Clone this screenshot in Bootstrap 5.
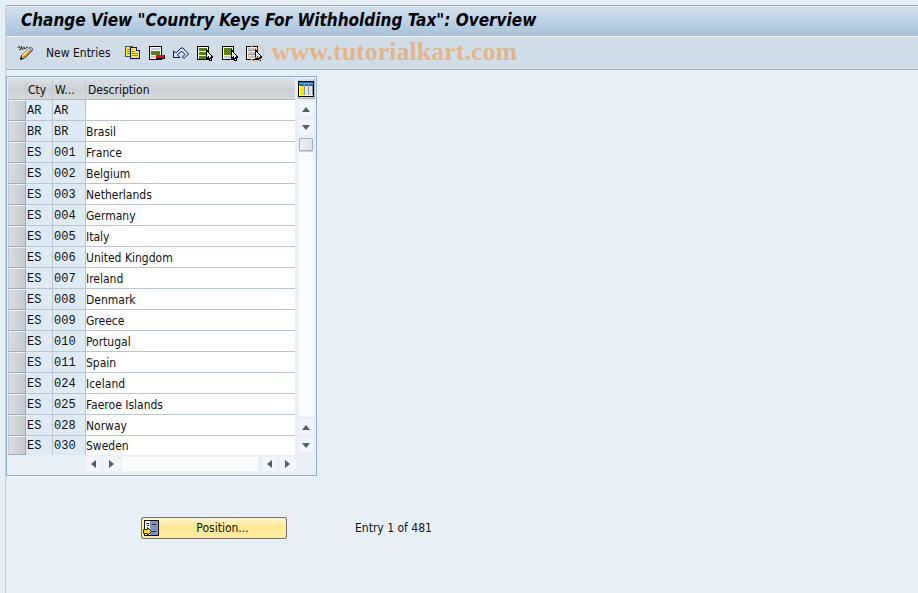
<!DOCTYPE html>
<html lang="en">
<head>
<meta charset="utf-8">
<meta name="viewport" content="width=device-width, initial-scale=1">
<title>Change View "Country Keys For Withholding Tax": Overview</title>
<link href="https://cdn.jsdelivr.net/npm/bootstrap@5.3.0/dist/css/bootstrap.min.css" rel="stylesheet">
<style>
body{background:#e8f0f7;color:#111;font-family:Tahoma,"DejaVu Sans Condensed","Noto Sans",sans-serif;font-size:12px;line-height:16px;padding-top:5px}
.sap-frame{margin-left:5px;border-left:1px solid #c5d0df;min-height:calc(100vh - 5px)}
.sap-title{height:32px;border-top:1px solid #9aa5bb;border-bottom:1px solid #f0f5fa;box-shadow:inset 0 1px #e9f1f8;background:linear-gradient(#d3e2ee,#a9c2da);padding-left:15px}
.sap-title h1{font-size:17px;line-height:20px;font-weight:bold;font-style:italic;color:#000;padding-bottom:2px}
.sap-tools{height:33px;background:#cfdde8;border-bottom:1px solid #a3b4c6;padding-left:11px;gap:8px}
.tool{border:0;background:none;padding:0;line-height:16px;color:#111}
.tool-text{margin:0 6px 0 4px}
.tool svg,.pos-btn svg,.grid-cfg svg{display:block}
.brand-mark{font-family:"Liberation Serif",serif;font-weight:bold;font-size:26px;line-height:28px;color:#e3b588;padding:0 0 2px 2px}
.brand-ring{left:0;top:0;color:#e3b588;pointer-events:none}
.grid-panel{width:311px;border:1px solid #8eaecb;padding:1px 1px 3px 1px;margin-top:6px}
.keys{width:287px;table-layout:fixed;border-collapse:separate;border-spacing:0;line-height:16px}
.keys th,.keys td{padding:0;height:21px;white-space:nowrap;overflow:hidden;font-weight:normal;vertical-align:middle}
.keys thead th{height:22px;background:linear-gradient(#dde1e4,#cbd0d4 60%,#d6dadd);border-right:1px solid #c2cad2;border-bottom:1px solid #adb5be;padding:2px 0 0 2px}
.keys thead th:last-child{border-right:0}
.keys tbody td{background:#fff;border-bottom:1px solid #b9c4d4;padding-top:2px}
.keys tbody td.code{background:#deebf5;border-right:1px solid #b9c4d4;padding-left:1px;font-family:"Courier New","Liberation Mono",monospace}
.keys tbody tr:last-child td{border-bottom:0;height:19px;padding-top:0}
.keys tbody td.pick{padding:0;border:0}
.pick button{display:block;width:18px;height:21px;padding:0;border:1px solid #a1a9b3;border-top-color:#eef1f4;border-left-color:#c0c6cc;background:linear-gradient(90deg,#d9dde1,#c5cad0)}
tr:last-child .pick button{height:19px}
.vscroll{gap:2px;padding-bottom:2px}
.hscroll{gap:2px;padding:1px 20px 0 77px}
.grid-cfg{width:18px;height:21px;border:1px solid #a8b0b9;border-top-color:#e9edf0;border-left-color:#e9edf0;background:#d6dade;padding:0}
.arrow{width:16px;height:16px;border:1px solid #edf1f5;background:#f2f6fa;padding:0;display:flex;align-items:center;justify-content:center;flex:none}
.arrow svg{display:block;fill:#4b5f6e}
.track{background:#f9fbfc;border:1px solid #eef3f7}
.rail{width:16px}
.thumb{width:14px;height:13px;border:1px solid #a3b1bd;border-radius:1px;background:linear-gradient(90deg,#e9f1f7,#d6e3ed);box-shadow:0 1px 1px #c5ccd2}
.below{padding:41px 0 0 135px;gap:68px}
.pos-btn{width:146px;height:22px;border:1px solid #75706a;border-radius:2px;background:linear-gradient(#fff7d1,#ffe991 45%,#ffeda6);padding:0 0 0 1px;color:#111}
</style>
<script src="https://cdn.jsdelivr.net/npm/bootstrap@5.3.0/dist/js/bootstrap.bundle.min.js"></script>
</head>
<body>
<svg class="position-absolute" width="0" height="0" aria-hidden="true">
<defs>
<pattern id="green" width="2" height="2" patternUnits="userSpaceOnUse"><path fill="#6b9200" d="M0 0h2v2H0z"/><path fill="#477400" d="M0 0h1v1H0zM1 1h1v1H1z"/></pattern>
<symbol id="cursor" viewBox="0 0 8 12"><path d="M1.500 1v9l2-2 1 3h2l-1-3h2z" fill="#fff" stroke="#000"/></symbol>
</defs>
</svg>
<div class="sap-frame">
<header class="sap-title d-flex align-items-center"><h1 class="m-0">Change View "Country Keys For Withholding Tax": Overview</h1></header>
<div class="sap-tools d-flex align-items-center" role="toolbar" aria-label="Application toolbar">
<button class="tool" aria-label="Display or change"><svg width="17" height="16" viewBox="0 0 17 16"><path d="M.5 2.500l2-1 1 2M2 5l2-1 1-3M5 5l2-3 1 2 2-2 1 0" fill="none" stroke="#222"/><path d="M3.500 14.500l1-4 8-8 3 2.500-8 8z" fill="#f7aa3c" stroke="#111"/><path d="M5.500 10.500l7-7" stroke="#fff0cf" stroke-width="1.500"/><path d="M12 3.500l1.500-1.500 2.500 2-1.500 2z" fill="#aebdf0" stroke="#6471a0"/><path d="M3 15l1-3 2 2z" fill="#111"/></svg></button>
<button class="tool tool-text">New Entries</button>
<button class="tool" aria-label="Copy as"><svg width="16" height="16" viewBox="0 0 16 16" shape-rendering="crispEdges"><path d="M.5 1.500h7v2h-2v8h-5z" fill="#fff23a" stroke="#55553a"/><path d="M2 4h3M2 6h3M2 8h3" stroke="#777"/><path d="M5.500 2.500h6l3 3v8h-9z" fill="#ffee20" stroke="#0000e8"/><path d="M11.500 2.500v3h3" fill="#fff" stroke="#0000e8"/><path d="M7 6.500h3M7 8.500h6M7 10.500h6" stroke="#8a8420"/></svg></button>
<button class="tool" aria-label="Delete"><svg width="16" height="16" viewBox="0 0 16 16" shape-rendering="crispEdges"><path d="M.5 1.500h12v13H.5z" fill="#fff" stroke="#000"/><path d="M2 3h9v2H2zM2 11h9v2H2z" fill="#bcc9d5"/><path fill="url(#green)" d="M2 6h9v4H2z"/><path d="M7 10h9v4H7z" fill="#000"/><path d="M7 10h8v3H7z" fill="#f00000"/></svg></button>
<button class="tool" aria-label="Undo change"><svg width="16" height="16" viewBox="0 0 16 16"><path d="M.5 6v6.500h6.500l-2.500-2.500 4-4 3.500 3.500-2.500 2.500 1.500 1.500 4.500-4.500-5.500-6h-2l-5 5z" fill="#d7e4f4" stroke="#151575"/></svg></button>
<button class="tool" aria-label="Select all"><svg width="16" height="16" viewBox="0 0 16 16" shape-rendering="crispEdges"><path d="M.5 1.500h11v13H.5z" fill="#fff" stroke="#000"/><path fill="url(#green)" d="M2 3h8v3H2zM2 7h8v3H2zM2 11h8v3H2z"/><use href="#cursor" x="8" y="4" width="8" height="12"/></svg></button>
<button class="tool" aria-label="Select block"><svg width="17" height="16" viewBox="-1 0 17 16" shape-rendering="crispEdges"><path d="M.5 1.500h11v13H.5z" fill="#fff" stroke="#000"/><path fill="url(#green)" d="M2 3h8v7H2z"/><path fill="#bcc9d5" d="M2 11h8v2H2z"/><use href="#cursor" x="8" y="4" width="8" height="12"/></svg></button>
<button class="tool position-relative" aria-label="Deselect all"><svg width="16" height="16" viewBox="0 0 16 16" shape-rendering="crispEdges"><path d="M.5 1.500h11v13H.5z" fill="#fff" stroke="#000"/><path fill="#bcc9d5" d="M2 3h8v2H2zM2 7h8v2H2zM2 11h8v2H2z"/><path d="M2 5.500h8M2 9.500h8" stroke="#7d8b99"/><use href="#cursor" x="8" y="4" width="8" height="12"/></svg><svg class="brand-ring position-absolute" width="18" height="18" viewBox="0 0 18 18" overflow="visible" aria-hidden="true"><circle cx="10" cy="8" r="8" fill="none" stroke="currentColor"/><path d="M13 5a4.500 4.500 0 1 0 0 6" fill="none" stroke="currentColor"/></svg></button>
<span class="brand-mark">www.tutorialkart.com</span>
</div>
<main>
<section class="grid-panel" aria-label="Country keys">
<div class="d-flex justify-content-between">
<table class="keys">
<colgroup><col style="width:18px"><col style="width:27px"><col style="width:33px"><col></colgroup>
<thead><tr><th aria-label="Select"></th><th scope="col">Cty</th><th scope="col">W...</th><th scope="col">Description</th></tr></thead>
<tbody>
<tr><td class="pick"><button aria-label="Select row 1"></button></td><td class="code">AR</td><td class="code">AR</td><td></td></tr>
<tr><td class="pick"><button aria-label="Select row 2"></button></td><td class="code">BR</td><td class="code">BR</td><td>Brasil</td></tr>
<tr><td class="pick"><button aria-label="Select row 3"></button></td><td class="code">ES</td><td class="code">001</td><td>France</td></tr>
<tr><td class="pick"><button aria-label="Select row 4"></button></td><td class="code">ES</td><td class="code">002</td><td>Belgium</td></tr>
<tr><td class="pick"><button aria-label="Select row 5"></button></td><td class="code">ES</td><td class="code">003</td><td>Netherlands</td></tr>
<tr><td class="pick"><button aria-label="Select row 6"></button></td><td class="code">ES</td><td class="code">004</td><td>Germany</td></tr>
<tr><td class="pick"><button aria-label="Select row 7"></button></td><td class="code">ES</td><td class="code">005</td><td>Italy</td></tr>
<tr><td class="pick"><button aria-label="Select row 8"></button></td><td class="code">ES</td><td class="code">006</td><td>United Kingdom</td></tr>
<tr><td class="pick"><button aria-label="Select row 9"></button></td><td class="code">ES</td><td class="code">007</td><td>Ireland</td></tr>
<tr><td class="pick"><button aria-label="Select row 10"></button></td><td class="code">ES</td><td class="code">008</td><td>Denmark</td></tr>
<tr><td class="pick"><button aria-label="Select row 11"></button></td><td class="code">ES</td><td class="code">009</td><td>Greece</td></tr>
<tr><td class="pick"><button aria-label="Select row 12"></button></td><td class="code">ES</td><td class="code">010</td><td>Portugal</td></tr>
<tr><td class="pick"><button aria-label="Select row 13"></button></td><td class="code">ES</td><td class="code">011</td><td>Spain</td></tr>
<tr><td class="pick"><button aria-label="Select row 14"></button></td><td class="code">ES</td><td class="code">024</td><td>Iceland</td></tr>
<tr><td class="pick"><button aria-label="Select row 15"></button></td><td class="code">ES</td><td class="code">025</td><td>Faeroe Islands</td></tr>
<tr><td class="pick"><button aria-label="Select row 16"></button></td><td class="code">ES</td><td class="code">028</td><td>Norway</td></tr>
<tr><td class="pick"><button aria-label="Select row 17"></button></td><td class="code">ES</td><td class="code">030</td><td>Sweden</td></tr>
</tbody>
</table>
<div class="vscroll d-flex flex-column align-items-center">
<button class="grid-cfg" aria-label="Table settings"><svg width="16" height="16" viewBox="0 0 16 16" shape-rendering="crispEdges"><path d="M.5.5h15v15H.5z" fill="#fff" stroke="#000"/><path d="M1 1h14v4H1z" fill="#1b70b8"/><path d="M1 2h14v1H1z" fill="#58a5dd"/><path d="M2 5h4v9H2z" fill="#ffe600"/><path d="M7 5h3v9H7zM11 5h3v9h-3z" fill="#dfe4ee"/><path d="M6.500 2v12M10.500 2v12M14.500 5v9" stroke="#8a929e"/></svg></button>
<button class="arrow" aria-label="First page"><svg width="8" height="5" viewBox="0 0 8 5"><path d="M0 5l4-5 4 5z"/></svg></button>
<button class="arrow" aria-label="Line down"><svg width="8" height="5" viewBox="0 0 8 5"><path d="M0 0l4 5 4-5z"/></svg></button>
<div class="rail track flex-grow-1 d-flex justify-content-center"><div class="thumb"></div></div>
<button class="arrow" aria-label="Line up"><svg width="8" height="5" viewBox="0 0 8 5"><path d="M0 5l4-5 4 5z"/></svg></button>
<button class="arrow" aria-label="Last page"><svg width="8" height="5" viewBox="0 0 8 5"><path d="M0 0l4 5 4-5z"/></svg></button>
</div>
</div>
<div class="hscroll d-flex">
<button class="arrow" aria-label="First column"><svg width="5" height="8" viewBox="0 0 5 8"><path d="M5 0L0 4l5 4z"/></svg></button>
<button class="arrow" aria-label="Column right"><svg width="5" height="8" viewBox="0 0 5 8"><path d="M0 0l5 4-5 4z"/></svg></button>
<div class="track flex-grow-1"></div>
<button class="arrow" aria-label="Column left"><svg width="5" height="8" viewBox="0 0 5 8"><path d="M5 0L0 4l5 4z"/></svg></button>
<button class="arrow" aria-label="Last column"><svg width="5" height="8" viewBox="0 0 5 8"><path d="M0 0l5 4-5 4z"/></svg></button>
</div>
</section>
<div class="below d-flex align-items-center">
<button class="pos-btn d-flex align-items-center"><svg width="16" height="16" viewBox="0 0 16 16" shape-rendering="crispEdges"><path d="M1.500.5h14v15h-14z" fill="#fff" stroke="#111"/><path d="M7 1h8v14H7z" fill="#8294bd"/><path d="M3 3.500h3M4 5.500h2M9 4.500h4M9 11.500h4" stroke="#26304d"/><path d="M.5 9.500h4v-2l4 4-4 4v-2h-4z" fill="#ffe600" stroke="#222" shape-rendering="auto"/></svg><span class="flex-grow-1 text-center">Position...</span></button>
<span>Entry 1 of 481</span>
</div>
</main>
</div>
</body>
</html>
